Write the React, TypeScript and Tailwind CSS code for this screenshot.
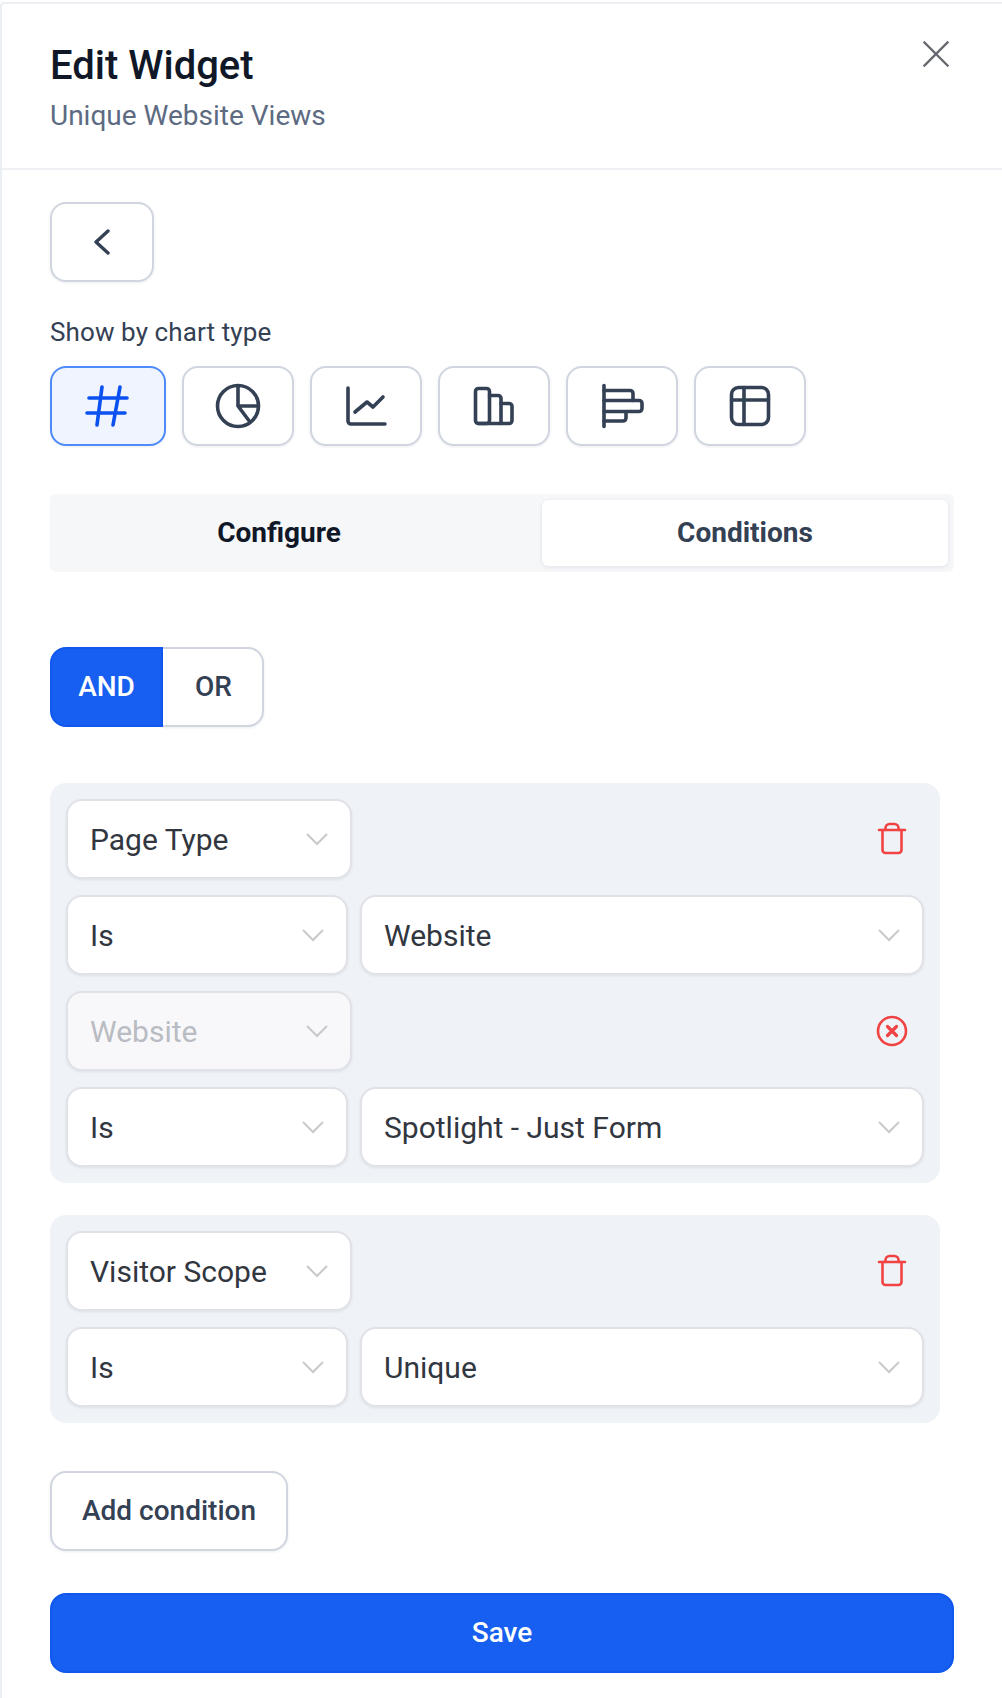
import type { ReactNode } from "react";

function Select({ label, width, disabled }: { label: string; width: string; disabled?: boolean }) {
  return (
    <div
      className={`flex h-[80px] items-center justify-between rounded-[16px] border-2 border-[#e1e2e8] px-[22px] text-[30px] shadow-[0_1px_3px_rgba(16,24,40,0.08)] ${width} ${
        disabled ? "bg-[#f8f8fa] text-[#b9bcc3]" : "bg-white text-[#31363f]"
      }`}
    >
      <span>{label}</span>
      <svg width="22" height="14" viewBox="0 0 22 14" fill="none" stroke="#c9c9cb" strokeWidth="2">
        <path d="M1 2l10 10L21 2" />
      </svg>
    </div>
  );
}

function TrashIcon() {
  return (
    <svg width="32" height="36" viewBox="0 0 32 36" fill="none" stroke="#f04343" strokeWidth="2.6" strokeLinecap="round" strokeLinejoin="round">
      <path d="M3 9h26" />
      <path d="M9.5 9V7a4 4 0 0 1 4-4h5a4 4 0 0 1 4 4v2" />
      <path d="M6.5 9v20a3 3 0 0 0 3 3h13a3 3 0 0 0 3-3V9" />
    </svg>
  );
}

function RemoveIcon() {
  return (
    <svg width="32" height="32" viewBox="0 0 32 32" fill="none" stroke="#f04343" strokeLinecap="round">
      <circle cx="16" cy="16" r="14" strokeWidth="2.6" />
      <path d="M11.5 11.5l9 9M20.5 11.5l-9 9" strokeWidth="3.2" />
    </svg>
  );
}

function FieldRow({ label, action, disabled }: { label: string; action: ReactNode; disabled?: boolean }) {
  return (
    <div className="flex items-center justify-between">
      <Select label={label} width="w-[286px]" disabled={disabled} />
      <div className="mr-[16px] flex w-[32px] justify-center">{action}</div>
    </div>
  );
}

function ValueRow({ value }: { value: string }) {
  return (
    <div className="flex gap-[12px]">
      <Select label="Is" width="w-[282px]" />
      <Select label={value} width="w-[564px]" />
    </div>
  );
}

function ChartButton({ children, active }: { children: ReactNode; active?: boolean }) {
  return (
    <button
      className={`flex h-[80px] items-center justify-center rounded-[16px] border-2 shadow-[0_1px_3px_rgba(16,24,40,0.08)] ${
        active ? "w-[116px] border-[#4d8bfb] bg-[#eff4ff]" : "w-[112px] border-[#d0d5e0] bg-white"
      }`}
    >
      {children}
    </button>
  );
}

function ChartIcon({ children, color = "#344054" }: { children: ReactNode; color?: string }) {
  return (
    <svg width="48" height="48" viewBox="0 0 48 48" fill="none" stroke={color} strokeWidth="3.6" strokeLinecap="round" strokeLinejoin="round">
      {children}
    </svg>
  );
}

export default function App() {
  return (
    <div className="h-[1698px] w-[1002px] bg-white pt-[2px] font-['Roboto',sans-serif]">
      <div className="h-[1696px] rounded-tl-[4px] border-t-2 border-l-2 border-[#ebeff4]">
        <header className="flex h-[166px] items-start justify-between border-b-2 border-[#eef0f4] pl-[48px] pr-[50px]">
          <div className="pt-[38px]">
            <h1 className="text-[40px] leading-[48px] font-medium text-[#101828]">Edit Widget</h1>
            <p className="mt-[6px] text-[28px] leading-[40px] text-[#5d6b82]">Unique Website Views</p>
          </div>
          <svg className="mt-[34px]" width="32" height="32" viewBox="0 0 32 32" fill="none" stroke="#666a70" strokeWidth="2.4" strokeLinecap="square">
            <path d="M4.5 4.5l23 23M27.5 4.5l-23 23" />
          </svg>
        </header>

        <main className="pl-[48px]">
          <button className="mt-[32px] flex h-[80px] w-[104px] items-center justify-center rounded-[16px] border-2 border-[#d0d5e0] bg-white shadow-[0_1px_3px_rgba(16,24,40,0.08)]">
            <svg width="16" height="26" viewBox="0 0 16 26" fill="none" stroke="#344054" strokeWidth="3.4" strokeLinecap="round" strokeLinejoin="round">
              <path d="M14 2L2 13l12 11" />
            </svg>
          </button>

          <p className="mt-[34px] text-[26px] leading-[32px] tracking-[0.004em] text-[#344054] [font-weight:450]">Show by chart type</p>

          <div className="mt-[18px] flex gap-[16px]">
            <ChartButton active>
              <ChartIcon color="#0b50f0">
                <path d="M5 16h38M3 31h38M18 5l-5 38M36 5l-7 38" />
              </ChartIcon>
            </ChartButton>
            <ChartButton>
              <ChartIcon>
                <circle cx="24" cy="24" r="20.5" />
                <path d="M24 4v20h20M24 24l12 16" />
              </ChartIcon>
            </ChartButton>
            <ChartButton>
              <ChartIcon>
                <path d="M6 6v33a3 3 0 0 0 3 3h34" />
                <path d="M13 30l12-10 6 5 10-10" />
              </ChartIcon>
            </ChartButton>
            <ChartButton>
              <ChartIcon>
                <rect x="5.5" y="6.5" width="14" height="35" rx="3" />
                <path d="M19.5 13.5H28a3 3 0 0 1 3 3v25" />
                <path d="M31 21.5h8a3 3 0 0 1 3 3v14a3 3 0 0 1-3 3H8.5" />
              </ChartIcon>
            </ChartButton>
            <ChartButton>
              <ChartIcon>
                <path d="M6 3.5v41" />
                <path d="M6 8.5h26a3 3 0 0 1 3 3v7" />
                <path d="M6 18.5h35a3 3 0 0 1 3 3v5a3 3 0 0 1-3 3H6" />
                <path d="M28 30v6a3 3 0 0 1-3 3H6" />
              </ChartIcon>
            </ChartButton>
            <ChartButton>
              <ChartIcon>
                <rect x="5.5" y="5.5" width="37" height="37" rx="7" />
                <path d="M5.5 18h37M18 5.5v37" />
              </ChartIcon>
            </ChartButton>
          </div>

          <div className="mt-[48px] flex h-[78px] w-[904px] rounded-[6px] bg-[#f6f7f9] p-[6px] text-[28px] font-bold">
            <div className="flex w-[446px] items-center justify-center text-[#101828]">Configure</div>
            <div className="ml-[40px] flex w-[406px] items-center justify-center rounded-[6px] bg-white text-[#344054] shadow-[0_1px_4px_rgba(16,24,40,0.1)]">
              Conditions
            </div>
          </div>

          <div className="mt-[75px] flex h-[80px] w-[214px] text-[28px] font-medium">
            <div className="flex w-[113px] items-center justify-center rounded-l-[16px] border-2 border-[#0f57ee] bg-[#175ff0] text-white">AND</div>
            <div className="flex flex-1 items-center justify-center rounded-r-[16px] border-2 border-l-0 border-[#d0d5e0] bg-white pl-[2px] text-[#344054] shadow-[0_1px_3px_rgba(16,24,40,0.08)]">
              OR
            </div>
          </div>

          <section className="mt-[56px] flex w-[890px] flex-col gap-[16px] rounded-[16px] bg-[#eff2f6] p-[16px]">
            <FieldRow label="Page Type" action={<TrashIcon />} />
            <ValueRow value="Website" />
            <FieldRow label="Website" disabled action={<RemoveIcon />} />
            <ValueRow value="Spotlight - Just Form" />
          </section>

          <section className="mt-[32px] flex w-[890px] flex-col gap-[16px] rounded-[16px] bg-[#eff2f6] p-[16px]">
            <FieldRow label="Visitor Scope" action={<TrashIcon />} />
            <ValueRow value="Unique" />
          </section>

          <button className="mt-[48px] flex h-[80px] w-[238px] items-center justify-center rounded-[16px] border-2 border-[#d0d5e0] bg-white text-[28px] font-medium text-[#344054] shadow-[0_1px_3px_rgba(16,24,40,0.08)]">
            Add condition
          </button>

          <button className="mt-[42px] flex h-[80px] w-[904px] items-center justify-center rounded-[16px] border-2 border-[#0f57ee] bg-[#175ff0] text-[28px] font-medium text-white">
            Save
          </button>
        </main>
      </div>
    </div>
  );
}
